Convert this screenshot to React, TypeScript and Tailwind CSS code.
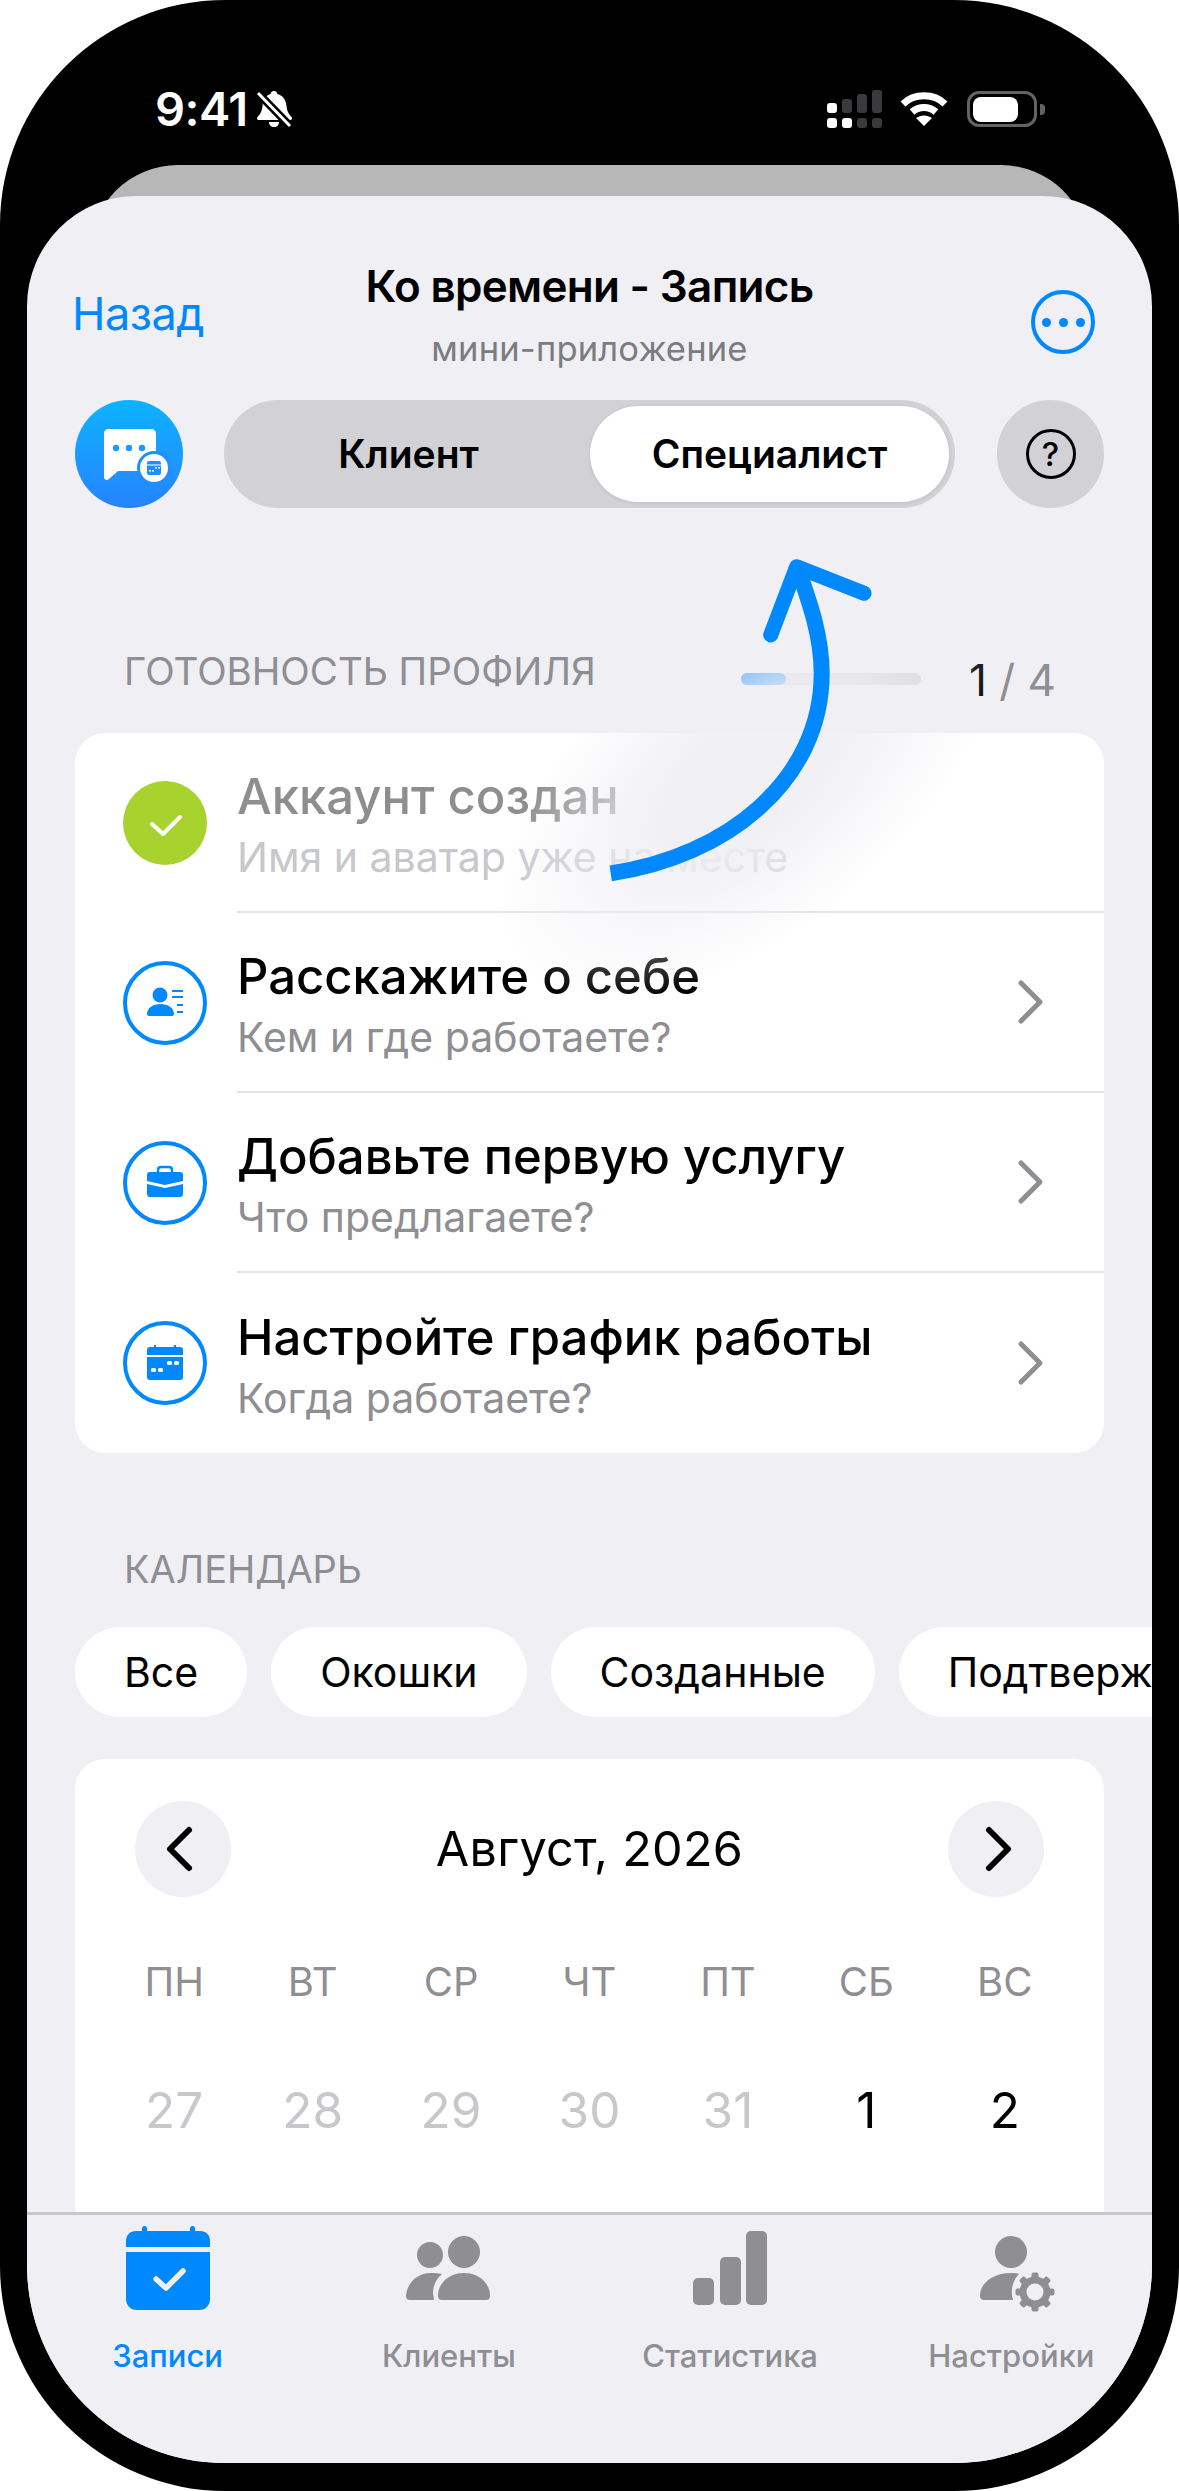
import React from "react";

const checklist = [
	{ title: "Аккаунт создан", sub: "Имя и аватар уже на месте", icon: "done" },
	{ title: "Расскажите о себе", sub: "Кем и где работаете?", icon: "person" },
	{ title: "Добавьте первую услугу", sub: "Что предлагаете?", icon: "case" },
	{ title: "Настройте график работы", sub: "Когда работаете?", icon: "calendar" },
];

const chips = ["Все", "Окошки", "Созданные", "Подтверждённые"];
const weekdays = ["ПН", "ВТ", "СР", "ЧТ", "ПТ", "СБ", "ВС"];
const dates = ["27", "28", "29", "30", "31", "1", "2"];

function StatusBar() {
	return (
		<div className="flex h-[165px] items-start justify-between pl-[155px] pr-[134px] pt-[86px]">
			<div className="flex h-[46px] items-center gap-[8px]">
				<span className="text-[47px] font-semibold leading-[46px] tracking-[-0.5px] text-white">9:41</span>
				<svg width="36" height="38" viewBox="0 0 36 38">
					<path d="M18 1c-2 0-3 1-3.400 3C9 5.500 7 10 6.500 16c-.5 5-2 8-5 11-1 1-.5 3 1.500 3h31c2 0 2.500-2 1.500-3-3-3-4.500-6-5-11C30 10 27 5.500 21.400 4 21 2 20 1 18 1z" fill="#fff" />
					<path d="M13 32h10c0 3-2 5-5 5s-5-2-5-5z" fill="#fff" />
					<path d="M2 3l32 33" stroke="#000" strokeWidth="8" />
					<path d="M2 3l32 33" stroke="#fff" strokeWidth="3" />
				</svg>
			</div>
			<div className="flex h-[46px] items-center">
				<svg width="58" height="40" viewBox="0 0 58 40" className="mr-[16px]">
					<rect x="1" y="14" width="10" height="10" rx="3" fill="#fff" />
					<rect x="1" y="29" width="10" height="10" rx="3" fill="#fff" />
					<rect x="16" y="10" width="10" height="14" rx="3" fill="#3a3a3c" />
					<rect x="16" y="29" width="10" height="10" rx="3" fill="#fff" />
					<rect x="31" y="5" width="10" height="19" rx="3" fill="#3a3a3c" />
					<rect x="31" y="29" width="10" height="10" rx="3" fill="#3a3a3c" />
					<rect x="46" y="1" width="10" height="23" rx="3" fill="#3a3a3c" />
					<rect x="46" y="29" width="10" height="10" rx="3" fill="#3a3a3c" />
				</svg>
				<svg width="48" height="36" viewBox="0 0 48 36" className="mr-[19px]">
					<path d="M3 13C14 2 34 2 45 13" fill="none" stroke="#fff" strokeWidth="7" />
					<path d="M12 21c7-6 17-6 24 0" fill="none" stroke="#fff" strokeWidth="7" />
					<path d="M16 27c5-3.500 11-3.500 16 0l-8 8z" fill="#fff" />
				</svg>
				<div className="flex h-[36px] w-[70px] items-center rounded-[12px] border-[3px] border-[#636366] pl-[3px]">
					<div className="h-[25px] w-[45px] rounded-[8px] bg-white" />
				</div>
				<div className="ml-[3px] h-[11px] w-[5px] rounded-r-[4px] bg-[#636366]" />
			</div>
		</div>
	);
}

function RowIcon({ kind }: { kind: string }) {
	if (kind === "done") {
		return (
			<div className="h-[84px] w-[84px] shrink-0 rounded-full bg-[#a8d32f]">
				<svg width="84" height="84" viewBox="0 0 84 84">
					<path d="M29 43l11 10 17-17" fill="none" stroke="#fff" strokeWidth="4" strokeLinecap="round" strokeLinejoin="round" />
				</svg>
			</div>
		);
	}
	return (
		<div className="h-[84px] w-[84px] shrink-0 rounded-full border-[4px] border-[#0088ff]">
			<svg width="76" height="76" viewBox="4 4 76 76" fill="#0088ff">
				{kind === "person" && (
					<>
						<circle cx="37" cy="34" r="7.500" />
						<path d="M24 53c0-6 6-10 13.500-10S51 47 51 53c0 1-1 2-2 2H26c-1 0-2-1-2-2z" />
						<path d="M49 30h11M49 36h11M54 44h6M54 51h6" stroke="#0088ff" strokeWidth="2.200" />
					</>
				)}
				{kind === "case" && (
					<>
						<path d="M35 32v-3c0-2 1-3 3-3h8c2 0 3 1 3 3v3" fill="none" stroke="#0088ff" strokeWidth="2.400" />
						<path d="M27 31h30c2 0 3 1 3 3v6l-18 4-18-4v-6c0-2 1-3 3-3z" />
						<path d="M24 43l18 4 18-4v10c0 2-1 3-3 3H27c-2 0-3-1-3-3z" />
					</>
				)}
				{kind === "calendar" && (
					<>
						<path d="M27 26h30c2 0 3 1 3 3v5H24v-5c0-2 1-3 3-3z" />
						<rect x="31" y="24" width="2" height="4" />
						<rect x="51" y="24" width="2" height="4" />
						<path d="M24 36h36v20c0 2-1 3-3 3H27c-2 0-3-1-3-3z" />
						<g fill="#fff">
							<rect x="44" y="40" width="5" height="4" rx="1.500" />
							<rect x="51" y="40" width="5" height="4" rx="1.500" />
							<rect x="28" y="47" width="5" height="4" rx="1.500" />
							<rect x="35" y="47" width="5" height="4" rx="1.500" />
						</g>
					</>
				)}
			</svg>
		</div>
	);
}

function Chevron({ dir, color, width, className }: { dir: "left" | "right"; color: string; width: number; className?: string }) {
	return (
		<svg width="32" height="48" viewBox="0 0 32 48" fill="none" className={className}>
			<path
				d={dir === "right" ? "M6 5l19 19L6 43" : "M26 5L7 24l19 19"}
				stroke={color}
				strokeWidth={width}
				strokeLinecap="round"
				strokeLinejoin="round"
			/>
		</svg>
	);
}

function Header() {
	return (
		<div className="grid h-[204px] grid-cols-[1fr_auto_1fr] px-[48px] pt-[67px]">
			<div className="-ml-[3px] mt-[23px] text-[45px] leading-[56px] tracking-[-0.5px] text-[#0088ff]">Назад</div>
			<div className="text-center">
				<div className="text-[44px] font-semibold leading-[46px] tracking-[-0.7px] text-black">Ко времени - Запись</div>
				<div className="mt-[20px] text-[34.500px] leading-[40px] tracking-[0.2px] text-[#7b7b80]">мини-приложение</div>
			</div>
			<div className="flex justify-end">
				<div className="mr-[9px] mt-[27px] flex h-[64px] w-[64px] items-center justify-center gap-[8px] rounded-full border-[4px] border-[#0088ff]">
					<i className="h-[9px] w-[9px] rounded-full bg-[#0088ff]" />
					<i className="h-[9px] w-[9px] rounded-full bg-[#0088ff]" />
					<i className="h-[9px] w-[9px] rounded-full bg-[#0088ff]" />
				</div>
			</div>
		</div>
	);
}

function RoleRow() {
	return (
		<div className="flex items-center px-[48px]">
			<div className="h-[108px] w-[108px] shrink-0 rounded-full bg-gradient-to-b from-[#0bb3ff] to-[#2682ff]">
				<svg width="108" height="108" viewBox="0 0 108 108">
					<path d="M33 29h43c3 0 5 2 5 5v33c0 2-2 4-5 4H43l-9 8c-2 2-5 1-5-2V33c0-2 2-4 4-4z" fill="#fff" />
					<circle cx="41" cy="48" r="3.200" fill="#1a9cff" />
					<circle cx="54" cy="48" r="3.200" fill="#1a9cff" />
					<circle cx="67" cy="48" r="3.200" fill="#1a9cff" />
					<circle cx="79" cy="68" r="17" fill="#1f8fff" />
					<circle cx="79" cy="68" r="14" fill="#fff" />
					<rect x="72" y="61" width="14" height="14" rx="2" fill="#1f8fff" />
					<rect x="72" y="64.500" width="14" height="1" fill="#fff" />
					<rect x="80" y="67" width="2" height="1.500" fill="#fff" />
					<rect x="83" y="67" width="2" height="1.500" fill="#fff" />
					<rect x="74" y="70" width="2" height="1.500" fill="#fff" />
					<rect x="77" y="70" width="2" height="1.500" fill="#fff" />
				</svg>
			</div>
			<div className="ml-[41px] flex h-[108px] w-[731px] items-center rounded-full bg-[#d1d1d6] pr-[6px]">
				<div className="flex-1 pl-[3px] text-center text-[39px] font-semibold leading-[44px] text-black">Клиент</div>
				<div className="flex h-[96px] w-[359px] items-center justify-center rounded-full bg-white text-[39px] font-semibold leading-[44px] text-black shadow-[0_1px_4px_rgba(0,0,0,0.08)]">
					Специалист
				</div>
			</div>
			<div className="ml-[42px] flex h-[108px] w-[107px] items-center justify-center rounded-full bg-[#d1d1d6]">
				<div className="flex h-[50px] w-[50px] items-center justify-center rounded-full border-[3px] border-black text-[33px] font-medium leading-none text-black">
					?
				</div>
			</div>
		</div>
	);
}

function ProfileSection() {
	return (
		<>
			<div className="mt-[143px] flex h-[58px] items-start pl-[97px] pr-[96px]">
				<div className="text-[38.500px] leading-[40px] text-[#8e8e93]">ГОТОВНОСТЬ ПРОФИЛЯ</div>
				<div className="ml-auto mt-[22px] h-[12px] w-[180px] rounded-full bg-[#d1d1d6]">
					<div className="h-full w-1/4 rounded-full bg-[#0088ff]" />
				</div>
				<div className="ml-[48px] text-[44px] leading-[58px] text-[#8e8e93]">
					<span className="text-black">1</span> / 4
				</div>
			</div>
			<div className="mx-[48px] mt-[24px] overflow-hidden rounded-[30px] bg-white">
				{checklist.map((row, i) => (
					<div key={row.title} className="flex h-[180px] items-stretch">
						<div className="flex items-center pl-[48px] pr-[30px]">
							<RowIcon kind={row.icon} />
						</div>
						<div className={`flex flex-1 items-center pr-[57px] ${i < 3 ? "border-b-2 border-[#e3e3e6]" : ""}`}>
							<div className="flex-1 pt-[5px]">
								<div className={`text-[49px] font-medium leading-[56px] ${i === 0 ? "text-[#8e8e8e]" : "text-black"}`}>{row.title}</div>
								<div className={`mt-[9px] text-[41px] leading-[46px] ${i === 0 ? "text-[#c7c7cc]" : "text-[#8e8e93]"}`}>{row.sub}</div>
							</div>
							{i > 0 && <Chevron dir="right" color="#8e8e93" width={5} />}
						</div>
					</div>
				))}
			</div>
		</>
	);
}

function CalendarSection() {
	return (
		<>
			<div className="mt-[96px] pl-[97px] text-[38px] leading-[40px] text-[#8e8e93]">КАЛЕНДАРЬ</div>
			<div className="mt-[38px] flex gap-[24px] pl-[48px]">
				{chips.map((c) => (
					<div key={c} className="flex h-[90px] shrink-0 items-center whitespace-nowrap rounded-full bg-white px-[49px] text-[41px] leading-[44px] text-black">
						{c}
					</div>
				))}
			</div>
			<div className="mx-[48px] mt-[42px] h-[600px] rounded-[30px] bg-white px-[30px] pt-[42px]">
				<div className="flex items-center justify-between px-[30px]">
					<div className="flex h-[96px] w-[96px] items-center justify-center rounded-full bg-[#efeff4]">
						<Chevron dir="left" color="#000" width={6} className="mr-[8px]" />
					</div>
					<div className="text-[48.500px] leading-[60px] tracking-[0.3px] text-black">Август, 2026</div>
					<div className="flex h-[96px] w-[96px] items-center justify-center rounded-full bg-[#efeff4]">
						<Chevron dir="right" color="#000" width={6} className="ml-[6px]" />
					</div>
				</div>
				<div className="mt-[63px] grid grid-cols-7 text-center text-[40px] leading-[44px] text-[#8e8e93]">
					{weekdays.map((d) => (
						<div key={d}>{d}</div>
					))}
				</div>
				<div className="mt-[76px] grid grid-cols-7 text-center text-[49.500px] leading-[60px]">
					{dates.map((d, i) => (
						<div key={d} className={i < 5 ? "text-[#c7c7cc]" : "text-black"}>
							{d}
						</div>
					))}
				</div>
			</div>
		</>
	);
}

function TabIcon({ kind }: { kind: string }) {
	return (
		<svg width="84" height="88" viewBox="0 0 84 88" className="overflow-visible">
			{kind === "records" && (
				<g fill="#0088ff">
					<rect x="16" y="1" width="5" height="10" rx="2.500" />
					<rect x="64" y="1" width="5" height="10" rx="2.500" />
					<path d="M10 6h64c6 0 10 4 10 10v6H0v-6C0 10 4 6 10 6z" />
					<path d="M0 27h84v47c0 6-4 11-11 11H11C4 85 0 80 0 74z" />
					<path d="M30 54l10 9 17-17" fill="none" stroke="#efeff4" strokeWidth="5.500" strokeLinecap="round" strokeLinejoin="round" />
				</g>
			)}
			{kind === "clients" && (
				<g fill="#8e8e93">
					<circle cx="23" cy="30" r="13" />
					<circle cx="57" cy="27" r="16" />
					<path d="M35 75c-3 0-4-2-4-4 0-13 11-23 26-23s26 10 26 23c0 2-1 4-4 4z" />
					<path d="M27 75H3c-3 0-4-2-4-4 1-13 11-23 25-23 4 0 7 0 11 1-6 5-9 12-9 19z" />
				</g>
			)}
			{kind === "stats" && (
				<g fill="#8e8e93">
					<rect x="5" y="53" width="21" height="27" rx="5" />
					<rect x="32" y="32" width="21" height="48" rx="5" />
					<rect x="58" y="6" width="21" height="74" rx="5" />
				</g>
			)}
			{kind === "settings" && (
				<g fill="#8e8e93">
					<circle cx="42" cy="27" r="16" />
					<path d="M15 75c-3 0-4-2-4-4 0-13 13-23 31-23 3 0 6 0 8 1-6 6-9 16-6 26z" />
					<circle cx="66" cy="67" r="12" fill="none" stroke="#8e8e93" strokeWidth="7" />
					{[0, 45, 90, 135, 180, 225, 270, 315].map((a) => (
						<rect key={a} x="62.500" y="47.500" width="7" height="7" rx="2" transform={`rotate(${a} 66 67)`} />
					))}
				</g>
			)}
		</svg>
	);
}

const tabs = [
	{ kind: "records", label: "Записи", active: true },
	{ kind: "clients", label: "Клиенты", active: false },
	{ kind: "stats", label: "Статистика", active: false },
	{ kind: "settings", label: "Настройки", active: false },
];

function TabBar() {
	return (
		<div className="grid h-[251px] shrink-0 grid-cols-4 border-t-[3px] border-[#c7c7cc] bg-[#efeff4] pt-[10px]">
			{tabs.map((t) => (
				<div key={t.label} className="flex flex-col items-center">
					<TabIcon kind={t.kind} />
					<div className={`mt-[23px] text-[31px] font-medium leading-[40px] ${t.active ? "text-[#0088ff]" : "text-[#8e8e93]"}`}>{t.label}</div>
				</div>
			))}
		</div>
	);
}

export default function App() {
	return (
		<div className="relative h-[2491px] w-[1179px] overflow-hidden bg-white font-['Inter','Noto_Sans',sans-serif]">
			<div className="h-full w-full overflow-hidden rounded-[225px] bg-black">
				<StatusBar />
				<div className="mx-[90px] h-[90px] rounded-t-[88px] bg-[#b7b7b7]" />
				<div className="mx-[27px] -mt-[59px] flex h-[2267px] flex-col overflow-hidden rounded-b-[198px] rounded-t-[110px] bg-[#efeff4]">
					<div className="min-h-0 flex-1 overflow-hidden">
						<Header />
						<RoleRow />
						<ProfileSection />
						<CalendarSection />
					</div>
					<TabBar />
				</div>
			</div>

			{/* soft spot behind the arrow, sits over the list */}
			<div className="pointer-events-none absolute left-[430px] top-[610px] h-[330px] w-[640px] -rotate-[40deg] bg-[radial-gradient(ellipse_closest-side,rgba(239,239,244,0.92)_32%,rgba(239,239,244,0.5)_60%,transparent_95%)]" />
			<svg width="290" height="340" viewBox="600 550 290 340" fill="none" className="pointer-events-none absolute left-[600px] top-[550px]">
				<path d="M610.700 873.300C726.700 856.700 821.700 780 821.700 673.300C821.700 636.700 810 603.300 798.300 570" stroke="#0088ff" strokeWidth="16" />
				<path d="M770.700 635L796.700 566.700L864 593.300" stroke="#0088ff" strokeWidth="15" strokeLinecap="round" strokeLinejoin="round" />
			</svg>
		</div>
	);
}
